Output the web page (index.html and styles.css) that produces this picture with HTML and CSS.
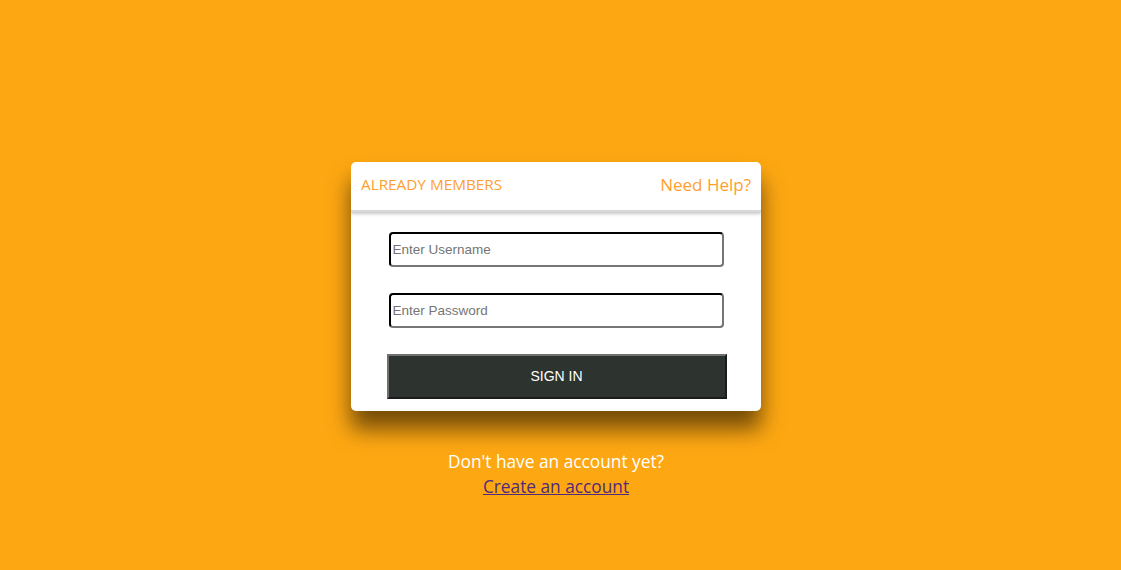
FILE: index.html
```html
<!DOCTYPE html>
<html>
<head>
<meta charset="utf-8">
<link rel="stylesheet" href="styles.css">
</head>
<body>
<main class="page">
  <section class="card">
    <header class="card-head">
      <span class="head-title">ALREADY MEMBERS</span>
      <span class="head-help">Need Help?</span>
    </header>
    <form class="card-form">
      <input class="field" type="text" placeholder="Enter Username">
      <input class="field" type="password" placeholder="Enter Password">
      <button class="signin" type="button">SIGN IN</button>
    </form>
  </section>
  <p class="signup-note">Don't have an account yet?</p>
  <a class="signup-link" href="#">Create an account</a>
</main>
</body>
</html>
```

FILE: styles.css
```css
html, body {
  margin: 0;
  padding: 0;
  height: 100%;
}
body {
  background: #fda712;
  font-family: "Open Sans", "Liberation Sans", sans-serif;
}
.page {
  display: flex;
  flex-direction: column;
  align-items: center;
  padding-top: 162px;
  padding-right: 9px;
}
.card {
  width: 410px;
  background: #fff;
  border-radius: 5px;
  box-shadow: 0 18px 22px rgba(0, 0, 0, 0.55);
  overflow: hidden;
}
.card-head {
  height: 50px;
  display: flex;
  justify-content: space-between;
  align-items: center;
  padding: 0 10px 4px;
  box-sizing: border-box;
  color: #ff9f30;
  font-size: 15.3px;
  box-shadow: 0 2px 3px rgba(0, 0, 0, 0.22);
  border-bottom: 2px solid #d8d8d8;
  position: relative;
}
.head-help {
  font-size: 17px;
}
.card-form {
  display: flex;
  flex-direction: column;
  align-items: center;
  padding: 20px 0 12px;
  margin: 0;
}
.field {
  width: 335px;
  height: 35px;
  box-sizing: border-box;
  border: 2px inset #767676;
  border-color: #1a1a1a #767676 #767676 #1a1a1a;
  border-radius: 4px;
  padding: 0 2px;
  font-family: "Liberation Sans", Arial, sans-serif;
  font-size: 13.5px;
  margin-bottom: 26px;
  outline: none;
}
.field::placeholder {
  color: #757575;
}
.signin {
  width: 340px;
  height: 45px;
  box-sizing: border-box;
  background: #2d3430;
  border: 2px solid;
  border-color: #707070 #1b1b1b #1b1b1b #707070;
  color: #fff;
  font-family: "Liberation Sans", Arial, sans-serif;
  font-size: 14px;
  font-weight: 400;
  padding-bottom: 2px;
  margin-left: 1px;
}
.signup-note {
  margin: 40px 0 0;
  color: #fff;
  font-size: 17.3px;
  line-height: 22px;
}
.signup-link {
  margin-top: 3px;
  color: #4f2a7e;
  font-size: 17.3px;
  line-height: 22px;
}
```
